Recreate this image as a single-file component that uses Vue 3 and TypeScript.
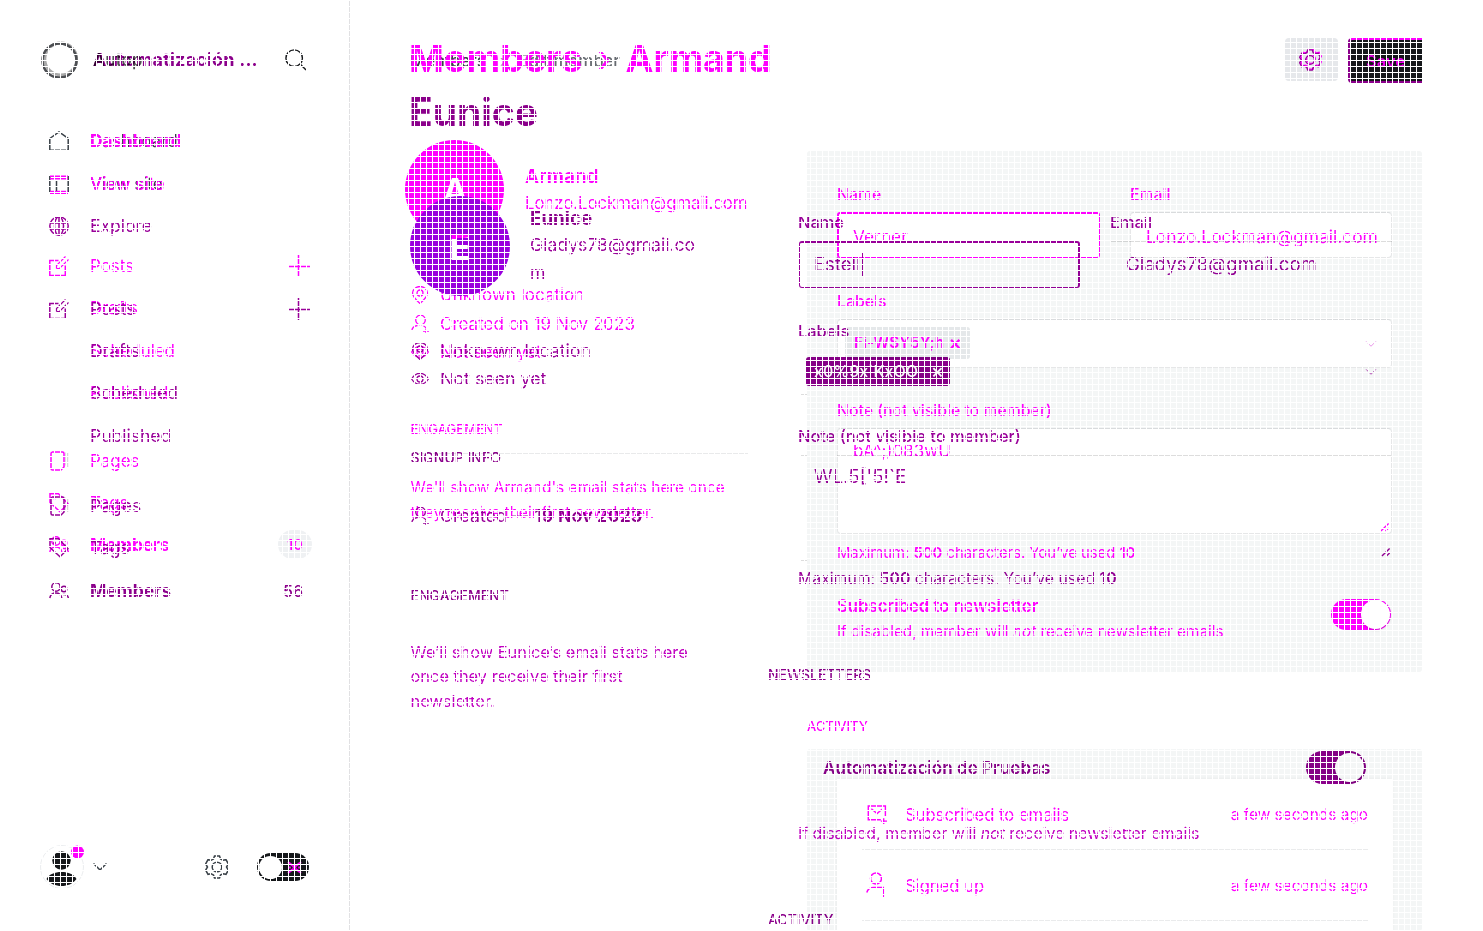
<script setup lang="ts">
interface NavItem {
  label: string
  icon?: string
  add?: boolean
  strong?: boolean
  count?: number
}

const sharedNav: NavItem[] = [
  { label: 'Dashboard', icon: 'home' },
  { label: 'View site', icon: 'site' },
]

const beforeNav: NavItem[] = [
  { label: 'Dashboard', strong: true },
  { label: 'View site' },
  { label: 'Posts', icon: 'edit', add: true },
  { label: 'Drafts' },
  { label: 'Scheduled' },
  { label: 'Published' },
  { label: 'Pages', icon: 'page' },
  { label: 'Tags', icon: 'tag' },
  { label: 'Members', icon: 'people', strong: true, count: 10 },
]

const afterNav: NavItem[] = [
  { label: 'Explore', icon: 'globe' },
  { label: 'Posts', icon: 'edit', add: true },
  { label: 'Drafts' },
  { label: 'Scheduled' },
  { label: 'Published' },
  { label: 'Pages', icon: 'page' },
  { label: 'Tags', icon: 'tag' },
  { label: 'Members', icon: 'people', strong: true, count: 56 },
]
</script>

<template>
  <div class="stage">
    <svg class="defs" width="0" height="0">
      <symbol id="home" viewBox="0 0 20 20"><path d="M.8 7.500 10 .9l9.200 6.600V19.200H.8z" /></symbol>
      <symbol id="site" viewBox="0 0 20 20"><path d="M.8 2v16M19.200 2v16M7.500 6v12" /><path stroke="#f0f" d="M1 .2h18M1 2.200h18M1 4.800h18M1 17.500h18M1 19.500h18" /></symbol>
      <symbol id="globe" viewBox="0 0 20 20"><circle cx="10" cy="10" r="9.200" /><ellipse cx="10" cy="10" rx="4.500" ry="9.200" /><path d="M1 7h18M1 13h18M10 1v18" /></symbol>
      <symbol id="edit" viewBox="0 0 20 20"><path d="M9.500 4.500H.8v15h15.500V9.500" /><path stroke-width="1.200" d="M7.500 12.500v-3l9-9M7.500 12.500h3l9-9" /></symbol>
      <symbol id="page" viewBox="0 0 20 20"><path d="M3 1h10.500q1.500 0 1.500 1.500V16l-3 3H3.500Q2 19 2 17.500V2.500Q2 1 3.500 1z" /><path stroke="#d8d8d8" d="M18.500 2v14M17 1.500v13" /></symbol>
      <symbol id="tag" viewBox="0 0 20 20"><path d="M1 .8h8.500l9.500 10-8 8L1 9.500zM5 4.500h1v1H5z" /></symbol>
      <symbol id="people" viewBox="0 0 20 20"><circle cx="7" cy="6" r="4.200" /><circle cx="15" cy="8" r="2.800" /><path d="M.8 17c.6-3.500 3-5 6-5s5.500 2 6 5M14 13.500c3-.5 5 1 5.300 3.500" /></symbol>
      <symbol id="plus" viewBox="0 0 22 22"><path d="M10.500 0v22M0 11.500h22" /></symbol>
      <symbol id="search" viewBox="0 0 24 24"><circle cx="10" cy="10" r="9" /><path d="m17 17 6 6" /></symbol>
      <symbol id="gear" viewBox="0 0 24 24"><circle cx="12" cy="12" r="4.800" /><path d="M9.500 1h5l1 3 2.500 1.300 3-.6 2.300 4.200L21.500 12l1.800 3.100-2.300 4.200-3-.6-2.500 1.300-1 3h-5l-1-3L6 18.700l-3 .6L.7 15.100 2.500 12 .7 8.900 3 4.700l3 .6L8.500 4z" /></symbol>
      <symbol id="chevron" viewBox="0 0 14 8"><path d="m.5.5 6.500 6.500 6.500-6.500" /></symbol>
      <symbol id="pin" viewBox="0 0 18 18"><path d="M9 17.500C4 13 1.500 10 1.500 7a7.500 6.500 0 0 1 15 0c0 3-2.500 6-7.500 10.500z" /><circle cx="9" cy="7" r="3" /></symbol>
      <symbol id="person" viewBox="0 0 18 18"><circle cx="9.500" cy="5" r="4.800" /><path d="M.8 16c.2-3 2-5 5.700-5.500M12.500 11c1 .5 2 1.200 2.500 2M15 13.500v5M12 16h6" /></symbol>
      <symbol id="eye" viewBox="0 0 18 18"><path d="M.6 9C5 1.500 13 1.500 17.400 9 13 16 5 16 .6 9z" /><circle cx="9" cy="9" r="3" /></symbol>
      <symbol id="mail" viewBox="0 0 21 20"><path d="M14 15.500H.8V1h18v11M4 4l6 5 6-5M17 14v6M14 17h6.500" /></symbol>
      <symbol id="member" viewBox="0 0 20 26"><circle cx="10" cy="6.500" r="5.500" /><path d="M.8 20.500c1-3.500 3.500-5 7-5h9.500V25" /></symbol>
      <symbol id="grip" viewBox="0 0 10 10"><path d="m.5 9 8.500-8.500M5.500 9 9 5.500" /></symbol>
    </svg>

    <!-- Unchanged regions -->
    <div class="layer base">
      <aside class="side edge">
        <div class="brand">
          <svg class="logo" viewBox="0 0 38 38"><circle class="soft" cx="19.800" cy="18" r="16" /><circle cx="18.500" cy="19.500" r="17" /></svg>
          <strong>Autop</strong>
          <svg class="find"><use href="#search" /></svg>
        </div>
        <nav class="nav">
          <div v-for="item in sharedNav" :key="item.label" class="item">
            <svg class="icon"><use :href="'#' + item.icon" /></svg><span>{{ item.label }}</span>
          </div>
        </nav>
        <footer class="foot">
          <svg class="face" viewBox="0 0 44 44"><circle class="halo" cx="22" cy="22" r="21.500" /><circle cx="21.500" cy="15.500" r="9.200" /><path d="M6.500 34c3-5 8-7 15-7s12 2 15 7c-4 5-9 7-15 7s-11-2-15-7z" /><circle class="ping" cx="37.500" cy="7" r="6.500" /></svg>
          <svg class="more"><use href="#chevron" /></svg>
          <svg class="cog"><use href="#gear" /></svg>
          <span class="night"><i></i><svg viewBox="0 0 16 14"><path d="m1 1 5 4h4l5-4M1 13l5-4h4l5 4M1 7h3M12 7h3M6 6.500h4" /></svg></span>
        </footer>
      </aside>
      <section class="mid"><p class="crumbs"><span>Members</span><span>›</span><span>Edit member</span></p></section>
      <section class="right">
        <div class="actions">
          <span class="gearbtn"><svg class="late"><use href="#gear" /></svg><svg><use href="#gear" /></svg></span>
          <span class="save">Save</span>
        </div>
        <div class="panel">
          <div class="box email"></div>
          <div class="box select"><span class="chip"><b>Fi-W$Y5Y;h</b><b class="x">×</b></span><svg><use href="#chevron" /></svg></div>
          <div class="box area"><svg><use href="#grip" /></svg></div>
        </div>
        <div class="panel feed"><div class="sheet"></div></div>
      </section>
    </div>

    <!-- Earlier state -->
    <div class="layer before">
      <aside class="side">
        <nav class="nav">
          <div v-for="item in beforeNav" :key="item.label" class="item" :class="{ strong: item.strong }">
            <svg class="icon"><use v-if="item.icon" :href="'#' + item.icon" /></svg><span>{{ item.label }}</span>
            <svg v-if="item.add" class="add"><use href="#plus" /></svg>
            <em v-if="item.count">{{ item.count }}</em>
          </div>
        </nav>
      </aside>
      <section class="mid">
        <h1><span>Members</span><small>›</small><span>Armand</span></h1>
        <div class="profile">
          <span class="avatar">A</span>
          <div class="who"><h3>Armand</h3><p>Lonzo.Lockman@gmail.com</p></div>
        </div>
        <div class="facts">
          <p class="fact"><svg><use href="#pin" /></svg>Unknown location</p>
          <p class="fact"><svg><use href="#person" /></svg>Created on 19 Nov 2023</p>
          <p class="fact"><svg><use href="#eye" /></svg>Not seen yet</p>
          <h4>ENGAGEMENT</h4>
          <hr />
          <p class="copy">We'll show Armand's email stats here once</p>
          <p class="copy">they receive their first newsletter.</p>
        </div>
      </section>
      <section class="right form">
        <div class="pair labels"><label>Name</label><label>Email</label></div>
        <div class="pair"><div class="field">Verner</div><div class="value">Lonzo.Lockman@gmail.com</div></div>
        <label class="lab">Labels</label>
        <label class="notelab">Note (not visible to member)</label>
        <p class="note">bA^;)083wU</p>
        <p class="limit">Maximum: <b>500</b> characters. You’ve used <b>10</b></p>
        <div class="news">
          <div><h5>Subscribed to newsletter</h5><p>If disabled, member will <i>not</i> receive newsletter emails</p></div>
          <span class="toggle"><i></i></span>
        </div>
        <h4>ACTIVITY</h4>
        <div class="event"><svg class="mail"><use href="#mail" /></svg><span>Subscribed to emails</span><time>a few seconds ago</time></div>
        <div class="event"><svg class="member"><use href="#member" /></svg><span>Signed up</span><time>a few seconds ago</time></div>
      </section>
    </div>

    <!-- Later state -->
    <div class="layer after">
      <aside class="side">
        <div class="brand"><strong>Automatización ...</strong></div>
        <nav class="nav">
          <div v-for="item in afterNav" :key="item.label" class="item" :class="{ strong: item.strong }">
            <svg class="icon"><use v-if="item.icon" :href="'#' + item.icon" /></svg><span>{{ item.label }}</span>
            <svg v-if="item.add" class="add"><use href="#plus" /></svg>
            <em v-if="item.count">{{ item.count }}</em>
          </div>
        </nav>
      </aside>
      <section class="mid">
        <h1>Eunice</h1>
        <div class="profile">
          <span class="avatar">E</span>
          <div class="who"><h3>Eunice</h3><p>Gladys78@gmail.com</p></div>
        </div>
        <div class="facts">
          <p class="fact"><svg><use href="#pin" /></svg>Unknown location</p>
          <p class="fact"><svg><use href="#eye" /></svg>Not seen yet</p>
          <h4>SIGNUP INFO</h4>
          <p class="fact"><svg><use href="#person" /></svg>Created —&nbsp;<b>19 Nov 2023</b></p>
          <h4>ENGAGEMENT</h4>
          <p class="copy">We’ll show Eunice’s email stats here once they receive their first newsletter.</p>
        </div>
      </section>
      <section class="right form">
        <div class="pair labels"><label>Name</label><label>Email</label></div>
        <div class="pair fields"><div class="field">Estell<i class="caret"></i></div><div class="value">Gladys78@gmail.com</div></div>
        <label class="lab">Labels</label>
        <div class="tags"><span class="chip"><b>x0%9x`KxOO</b><b class="x">×</b></span><svg><use href="#chevron" /></svg></div>
        <hr class="tick" />
        <label class="notelab">Note (not visible to member)</label>
        <hr class="long" />
        <p class="note">WL.5['5!`E</p>
        <div class="end"><hr class="tick" /><svg><use href="#grip" /></svg></div>
        <p class="limit">Maximum: <b>500</b> characters. You’ve used <b>10</b></p>
        <h4>NEWSLETTERS</h4>
        <div class="news"><h5>Automatización de Pruebas</h5><span class="toggle"><i></i></span></div>
        <p class="hint">If disabled, member will <i>not</i> receive newsletter emails</p>
        <h4 class="act">ACTIVITY</h4>
      </section>
    </div>
    <div class="mesh"></div>
  </div>
</template>

<style>
body { background: #fff; overflow: hidden; }
</style>

<style scoped>
.stage { position: relative; display: grid; width: 1483px; height: 931px; overflow: hidden; background: #fff; font: 400 17px/20px Inter, sans-serif; white-space: nowrap; }
.stage * { box-sizing: border-box; margin: 0; }
.defs { position: absolute; }
.layer { grid-area: 1 / 1; display: flex; width: 1483px; height: 931px; }
.mesh { position: absolute; inset: 0; background: repeating-linear-gradient(90deg, #fff 0 1px, transparent 1px 6px), repeating-linear-gradient(#fff 0 1px, transparent 1px 6px); }
svg { fill: none; stroke: currentColor; stroke-width: 1.5; flex: none; overflow: visible; }
.base { color: #394047; }
.before { color: #f0f; }
.after { color: #990099; mix-blend-mode: multiply; }
.side { width: 350px; flex: none; }
.edge { border-right: 1px solid #e1e1e3; display: flex; flex-direction: column; }
.mid { width: 457px; flex: none; padding-left: 61px; }
.right { width: 615px; flex: none; }
.before .right { padding-left: 30px; }
.after .mid { width: 419px; }
.after .right { width: 653px; }

.brand { display: flex; align-items: center; height: 42px; margin-top: 39px; padding-left: 41px; }
.logo { width: 38px; height: 38px; color: #4c4e52; stroke-width: 2.5; }
.logo .soft { stroke: #aaa; stroke-width: 3; }
.brand strong { font-size: 18px; font-weight: 700; letter-spacing: .2px; margin-left: 14px; color: #15171a; }
.base .brand strong { font-weight: 500; font-size: 17px; color: #555; }
.find { width: 22px; height: 22px; margin-left: auto; margin-right: 42px; color: #15171a; }
.nav { padding-left: 49px; display: grid; }
.item { display: flex; align-items: flex-start; height: 20px; }
.icon { width: 20px; height: 20px; margin-right: 21px; }
.strong { font-weight: 700; }
.add { width: 22px; height: 22px; margin: -1px 40px 0 auto; }
.item em { font-style: normal; font-size: 15px; font-weight: 500; margin-left: auto; }
.base .nav { margin-top: 50px; grid-template-rows: 43px 43px; }
.before .nav { padding-top: 131px; grid-template-rows: 43px 82px 42px 42.5px 42.5px 68px 42px 42px 20px; font-size: 16.9px; }
.before .item:nth-child(2) { font-weight: 500; font-size: 17.200px; }
.before .strong { font-size: 17.200px; }
.before .item em { background: #eff1f3; border-radius: 15px; width: 34px; height: 29px; line-height: 30px; margin: -5px 38px 0 auto; text-align: center; }
.after .brand { padding-left: 79px; }
.after .brand strong { color: #8b008b; }
.after .nav { padding-top: 134.5px; grid-template-rows: 83px 42px 42.5px 42.5px 70px 42.500px 42.500px 20px; font-size: 17.500px; }
.after .strong { font-size: 17.500px; }
.after .item em { margin-right: 47px; font-size: 16px; }
.after .strong { color: #8b008b; }

.foot { margin-top: auto; margin-bottom: 42px; height: 44px; display: flex; align-items: center; padding-left: 40px; }
.face { width: 44px; height: 44px; fill: #15171a; stroke: none; }
.face .halo { fill: none; stroke: #eceef0; stroke-width: 1; }
.face .ping { fill: #f0f; }
.more { width: 14px; height: 8px; margin-left: 9px; }
.cog { width: 24px; height: 26px; margin-left: 98px; }
.night { width: 52px; height: 28px; margin-left: 28px; background: #15171a; border-radius: 14px; display: flex; align-items: center; padding-left: 2px; }
.night i { width: 23px; height: 23px; border-radius: 50%; background: #fff; }
.night svg { width: 15px; height: 13px; margin-left: 5px; color: #f000f0; stroke-width: 2.200; }

.crumbs { display: flex; margin-top: 51px; margin-left: -1px; font-size: 16.800px; font-weight: 500; }
.crumbs span:nth-child(2) { margin: 0 12px 0 14px; color: #aaa; }
.crumbs span:nth-child(3) { color: #666a70; font-weight: 500; }

.actions { display: flex; justify-content: flex-end; margin-top: 38px; height: 45px; }
.gearbtn { display: grid; width: 53px; height: 43px; margin-right: 10px; border-radius: 4px; background: #e6e8eb; place-items: center; }
.gearbtn svg { grid-area: 1 / 1; width: 22px; height: 22px; color: #990099; margin-right: 4px; }
.gearbtn .late { color: #f0f; margin: 0 1px 2px 0; }
.save { width: 74px; height: 45px; background: #15171a; border: 0 solid #8b008b; border-width: 2px 0 2px 3px; border-top-color: #f0f; border-radius: 4px 0 0 4px; color: #e800e8; font-weight: 600; font-size: 16.5px; line-height: 42px; padding-left: 15px; }
.panel { margin-top: 68px; height: 521px; background: #f4f6f6; border-radius: 3px; padding: 61px 30px 0; }
.box { background: #fff; border: 1px solid #e6e7e8; border-top-color: #d9dbdd; border-radius: 4px; display: flex; }
.email { width: 262px; height: 46px; margin-left: auto; }
.select { height: 49px; margin-top: 61px; padding: 7px; justify-content: space-between; }
.select > svg { width: 12px; height: 6px; margin: 14px 7px 0 0; color: #e070e0; stroke-width: 1; }
.chip { display: flex; justify-content: space-between; font-size: 16px; border-radius: 3px; }
.select .chip { width: 125px; height: 32px; padding: 6px 8px 6px 9px; background: #e5e8ea; color: #f0f; font-size: 15.300px; }
.chip b { font-weight: 600; }
.chip .x { font-size: 20px; }
.area { height: 106px; margin-top: 60px; justify-content: flex-end; align-items: flex-end; padding: 1px; }
.area svg, .end svg { width: 10px; height: 9px; color: #f0f; }
.feed { margin-top: 77px; height: 182px; padding-top: 30px; }
.sheet { height: 160px; background: #fff; box-shadow: 0 0 4px #0000000f; }

h1 { font-size: 37px; font-weight: 700; line-height: 40px; display: flex; margin-left: -2px !important; }
h3 { font-size: 18.8px; font-weight: 600; line-height: 20px; }
h4 { font-size: 14px; font-weight: 500; line-height: 20px; }
h5 { font-size: 16.7px; font-weight: 600; line-height: 20px; }
.before h1 { padding-top: 39px; height: 79px; font-size: 37.400px; }
.before h1 small { font-size: 37px; font-weight: 400; margin: 0 14px 0 15px; }
.profile { display: flex; height: 100px; }
.before .profile { margin-top: 61px; }
.avatar { width: 99px; height: 99px; border-radius: 50%; background: #f0f; color: #fff; font-size: 36px; font-weight: 600; line-height: 103px; text-align: center; margin: 0 21px 0 -6px; padding-left: 1px; flex: none; }
.before .who { padding-top: 26.500px; }
.before .who p { margin-top: 6.500px; font-size: 16.700px; }
.before h3 { font-weight: 700; }
.facts { display: grid; margin-left: -.5px !important; }
.before .facts { padding-top: 45px; grid-template-rows: 29px 27.500px 77.500px 24px 35px 24.500px; }
.fact { display: flex; height: 20px; }
.fact svg { width: 18px; height: 18px; margin: 1px 11.500px 0 0; stroke-width: 1.3; }
.fact b { font-weight: 600; color: #8b008b; }
.before .facts h4 { font-size: 13.100px; }
.before .copy { font-size: 15.500px; }
.facts hr { border: 0; height: 1px; width: 337px; margin-top: 10px; background: #e9eaeb; }
.after h1 { padding-top: 91.5px; height: 131.5px; font-size: 39px; color: #8b008b; }
.after .profile { margin-top: 64.5px; }
.after .avatar { width: 100px; height: 100px; margin: 0 20px 0 -1px; background: #9900dd; padding-left: 0; line-height: 102px; }
.after .who { width: 172px; padding-top: 12.500px; }
.after .who p { margin-top: 2.25px; line-height: 28.5px; white-space: normal; word-break: break-all; font-size: 17.600px; }
.after h3, .after h4 { color: #8b008b; }
.after h3 { font-weight: 700; }
.after .facts { padding-top: 45px; grid-template-rows: 28px 78.500px 58.500px 79.500px 54px 74px; }
.after .fact { font-size: 17.800px; }
.after .copy { width: 290px; white-space: normal; font-size: 16.400px; line-height: 24.600px; color: #c000c0; }

label { font-size: 15.800px; font-weight: 500; line-height: 20px; display: block; }
.pair { display: flex; }
.before .labels { padding-top: 185px; height: 212px; }
.before .labels label:first-child { width: 293px; }
.field { width: 263px; height: 46px; line-height: 47px; padding-left: 14px; border: 1px solid #f0f; border-width: 2px 1px 1px 2px; border-radius: 3px; font-size: 17.300px; }
.before .field { background: #fff; line-height: 45px; }
.before .value { margin-left: 46px; line-height: 50px; height: 46px; font-size: 17.400px; }
.before .lab { margin-top: 34px; }
.before .notelab { margin-top: 89px; }
.before .note { font-size: 17px; margin: 20px 0 0 16px; }
.limit b { font-weight: 600; }
.before .limit { margin-top: 82px; font-size: 14.800px; }
.before .news { display: flex; justify-content: space-between; width: 554px; height: 46px; margin-top: 33px; }
.news p { font-size: 15.300px; }
.news div p { margin-top: 6px; }
.toggle { width: 60px; height: 31px; border-radius: 16px; background: #f0f; padding: 1px; display: flex; justify-content: flex-end; margin-top: 3px; }
.toggle i { width: 29px; height: 29px; border-radius: 50%; background: #fff; box-shadow: 0 1px 3px #0003; }
.before .right h4 { margin: 74px 0 0 -30px; font-size: 13px; }
.event { display: flex; width: 506px; height: 71px; margin-left: 25px; border-bottom: 1px solid #eaebec; font-size: 16.600px; }
h4 + .event { margin-top: 43px; height: 71px; }
.event span, .event time { margin-top: 26px; }
.event time { margin-left: auto; font-size: 15.400px; }
.event .mail { width: 21px; height: 19px; margin: 26px 17px 0 5px; }
.event .member { width: 20px; height: 26px; margin: 22px 19px 0 4px; }

.after label { font-size: 16.400px; }
.after .labels { padding: 212px 0 0 29px; height: 241px; }
.after .labels label:first-child { width: 312px; }
.after .fields { padding-left: 30px; }
.after .field { width: 281px; height: 47px; border-color: #990099; line-height: 45px; border-width: 2px 2px 1px 1px; display: flex; align-items: center; font-size: 18.500px; padding-bottom: 2px; }
.caret { width: 1px; height: 23px; margin-left: 1px !important; background: #990099; }
.after .value { margin-left: 31px; width: 281px; padding-left: 15px; border-top: 1px solid #dcdcdc; line-height: 44px; font-size: 18.600px; }
.after .lab { margin: 32.500px 0 0 29px; }
.tags { display: flex; justify-content: space-between; height: 29px; margin: 16.500px 45px 0 37px; }
.tags .chip { width: 144px; height: 29px; background: #8b008b; color: #fff; padding: 4px 6px 0 8px; }
.tags .chip b { font-weight: 500; }
.tags svg { width: 12px; height: 6px; margin-top: 12px; color: #b040b0; stroke-width: 1.200; }
.form > .tick, .end .tick { border: 0; width: 6px; height: 1px; background: #ddd; margin: 8px 0 0 32px; }
.after .notelab { margin: 31px 0 0 29px; }
.long { border: 0; width: 590px; height: 1px; margin: 9px 0 0 32px; background: linear-gradient(90deg, #ddd 0 6px, transparent 6px 36px, #ddd 36px); }
.after .note { margin: 11px 0 0 45px; font-size: 18.800px; }
.end { display: flex; height: 20px; margin-top: 61px; justify-content: space-between; }
.end .tick { margin-top: 12px; }
.end svg { margin-right: 31px; color: #990099; }
.after .limit { margin: .5px 0 0 29px; font-size: 15.800px; }
.after .form h4 { margin-top: 76.500px; margin-left: -1px; }
.after .news { display: flex; justify-content: space-between; margin: 66px 56px 0 54px; height: 33px; }
.after .news h5 { margin-top: 7px; color: #8b008b; font-size: 17.100px; }
.after .toggle { height: 33px; margin-top: 0; padding: 2px; background: #8b008b; border-radius: 17px; }
.hint { margin: 39.500px 0 0 29px; color: #c000c0; font-size: 15.900px; }
.after .form .act { margin-top: 66px; }
</style>
